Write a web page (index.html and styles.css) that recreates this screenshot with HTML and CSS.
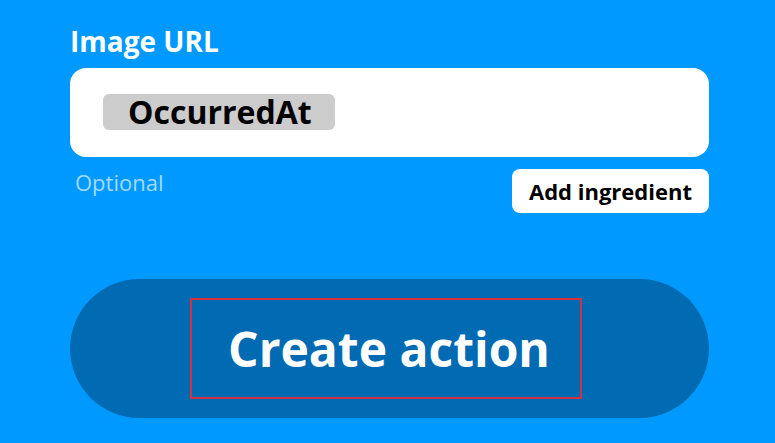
FILE: index.html
```html
<!DOCTYPE html>
<html>
<head>
<meta charset="utf-8">
<link rel="stylesheet" href="styles.css">
</head>
<body>
<div class="page">
  <div class="field-label">Image URL</div>
  <div class="input-box">
    <span class="chip">OccurredAt</span>
  </div>
  <div class="helper-row">
    <span class="helper">Optional</span>
    <button class="add-btn">Add ingredient</button>
  </div>
  <div class="create-pill">
    <div class="create-focus">Create action</div>
  </div>
</div>
</body>
</html>
```
FILE: styles.css
```css
html, body {
  margin: 0;
  padding: 0;
  background: #0099ff;
}
body {
  width: 775px;
  height: 443px;
  overflow: hidden;
  font-family: "Open Sans", "Lato", sans-serif;
  font-variant-ligatures: none;
}
.page {
  padding: 24px 66px 0 70px;
  display: flex;
  flex-direction: column;
}
.field-label {
  color: #fff;
  font-weight: 700;
  font-size: 28px;
  line-height: 34px;
  margin-bottom: 10px;
}
.input-box {
  background: #fff;
  border-radius: 16px;
  height: 89px;
  display: flex;
  align-items: center;
  padding-left: 33px;
  box-sizing: border-box;
}
.chip {
  background: #cccccc;
  border-radius: 6px;
  height: 36px;
  display: inline-flex;
  align-items: center;
  padding: 0 23px 0 25px;
  font-size: 32px;
  font-weight: 700;
  color: #000;
  margin-top: -2px;
}
.helper-row {
  display: flex;
  justify-content: space-between;
  align-items: flex-start;
  margin-top: 12px;
}
.helper {
  color: #a3daff;
  font-size: 22px;
  line-height: 26px;
  margin-left: 5px;
}
.add-btn {
  background: #fff;
  border: none;
  border-radius: 8px;
  height: 44px;
  width: 197px;
  font-family: inherit;
  font-size: 22px;
  font-weight: 700;
  color: #000;
  padding: 0;
}
.create-pill {
  margin-top: 66px;
  height: 139px;
  background: #006ab3;
  border-radius: 70px;
  display: flex;
  align-items: center;
  justify-content: center;
}
.create-focus {
  box-sizing: border-box;
  width: 392px;
  height: 101px;
  border: 2px solid #d6303c;
  color: #fff;
  font-size: 48px;
  font-weight: 700;
  display: flex;
  align-items: center;
  justify-content: center;
  padding-left: 6px;
  margin-right: 7px;
}
```
